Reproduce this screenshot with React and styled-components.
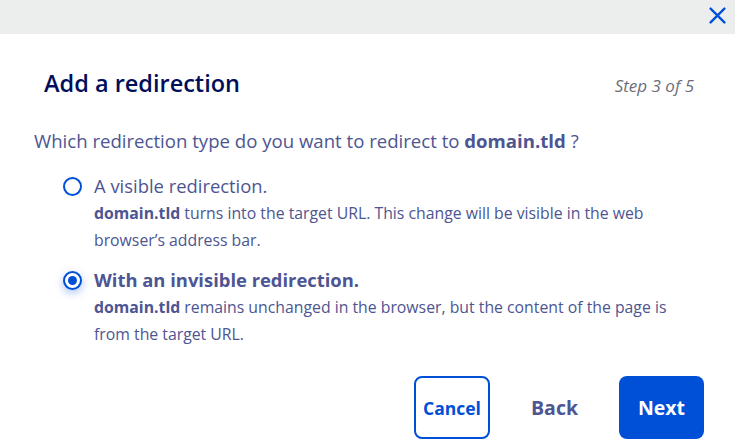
import React, { useState } from 'react';
import styled, { createGlobalStyle } from 'styled-components';

const GlobalStyle = createGlobalStyle`
  html, body {
    margin: 0;
    padding: 0;
    background: #ffffff;
  }
  body {
    font-family: "Open Sans", "Noto Sans", sans-serif;
    color: #4d5592;
  }
`;

const options = [
  {
    id: 'visible',
    title: 'A visible redirection.',
    text: 'turns into the target URL. This change will be visible in the web browser’s address bar.',
  },
  {
    id: 'invisible',
    title: 'With an invisible redirection.',
    text: 'remains unchanged in the browser, but the content of the page is from the target URL.',
  },
];

const App = () => {
  const [selected, setSelected] = useState('invisible');

  return (
    <Modal>
      <GlobalStyle />
      <TopBar>
        <CloseButton aria-label="Close">
          <svg width="17" height="17" viewBox="0 0 16 16">
            <path
              d="M1.5 1.5 L14.5 14.5 M14.5 1.5 L1.5 14.5"
              stroke="#0050d7"
              strokeWidth="2.2"
              strokeLinecap="round"
            />
          </svg>
        </CloseButton>
      </TopBar>

      <Body>
        <Header>
          <Title>Add a redirection</Title>
          <Step>Step 3 of 5</Step>
        </Header>

        <Question>
          Which redirection type do you want to redirect to <b>domain.tld</b> ?
        </Question>

        <OptionList>
          {options.map((option) => (
            <Option key={option.id} onClick={() => setSelected(option.id)}>
              <Radio checked={selected === option.id} />
              <OptionBody>
                <OptionTitle checked={selected === option.id}>
                  {option.title}
                </OptionTitle>
                <OptionText>
                  <b>domain.tld</b> {option.text}
                </OptionText>
              </OptionBody>
            </Option>
          ))}
        </OptionList>

        <Footer>
          <OutlineButton>Cancel</OutlineButton>
          <GhostButton>Back</GhostButton>
          <PrimaryButton>Next</PrimaryButton>
        </Footer>
      </Body>
    </Modal>
  );
};

const Modal = styled.div`
  width: 735px;
  height: 447px;
  background: #ffffff;
  overflow: hidden;
`;

const TopBar = styled.div`
  height: 34px;
  background: #eceeed;
  display: flex;
  justify-content: flex-end;
  align-items: center;
  padding-right: 8px;
`;

const CloseButton = styled.button`
  border: 0;
  background: none;
  padding: 0;
  width: 20px;
  height: 20px;
  display: flex;
  align-items: center;
  justify-content: center;
  margin-top: -4px;
  cursor: pointer;
`;

const Body = styled.div`
  padding: 0 41px 0 34px;
`;

const Header = styled.div`
  display: flex;
  justify-content: space-between;
  align-items: baseline;
  padding: 34px 0 0 10px;
`;

const Title = styled.h2`
  margin: 0;
  font-size: 23.5px;
  line-height: 30px;
  font-weight: 600;
  color: #000e5c;
`;

const Step = styled.span`
  font-size: 17px;
  font-style: italic;
  color: #6d6d79;
`;

const Question = styled.p`
  margin: 31px 0 0;
  font-size: 18.6px;
  line-height: 24px;
  color: #4d5592;

  b {
    font-weight: 700;
  }
`;

const OptionList = styled.div`
  display: flex;
  flex-direction: column;
  gap: 12px;
  margin-top: 19px;
  padding-left: 29px;
`;

const Option = styled.label`
  display: flex;
  gap: 12px;
  cursor: pointer;
`;

const Radio = styled.span`
  flex: none;
  box-sizing: border-box;
  width: 19px;
  height: 19px;
  margin-top: 5px;
  border-radius: 50%;
  border: 2px solid #0050d7;
  background: #ffffff;
  position: relative;
  box-shadow: ${({ checked }) =>
    checked ? '0 3px 8px rgba(0, 80, 215, 0.35)' : 'none'};

  &::after {
    content: '';
    display: ${({ checked }) => (checked ? 'block' : 'none')};
    position: absolute;
    inset: 3px;
    border-radius: 50%;
    background: #0050d7;
  }
`;

const OptionBody = styled.div`
  display: flex;
  flex-direction: column;
`;

const OptionTitle = styled.span`
  font-size: 18.4px;
  line-height: 28px;
  font-weight: ${({ checked }) => (checked ? 700 : 400)};
  color: #4d5592;
`;

const OptionText = styled.p`
  margin: 0;
  font-size: 15.8px;
  line-height: 27px;
  color: #4d5592;

  b {
    font-weight: 700;
  }
`;

const Footer = styled.div`
  display: flex;
  justify-content: flex-end;
  align-items: center;
  margin: 28px -10px 0 0;
`;

const BaseButton = styled.button`
  font-family: "Open Sans", "Noto Sans", sans-serif;
  font-weight: 700;
  height: 63px;
  border-radius: 8px;
  cursor: pointer;
`;

const OutlineButton = styled(BaseButton)`
  width: 76px;
  border: 2px solid #0050d7;
  background: #ffffff;
  color: #0050d7;
  font-size: 17.5px;
  padding: 0;
`;

const GhostButton = styled(BaseButton)`
  width: 129px;
  border: 0;
  background: none;
  color: #4d5592;
  font-size: 19.5px;
`;

const PrimaryButton = styled(BaseButton)`
  width: 85px;
  border: 0;
  background: #0050d7;
  color: #ffffff;
  font-size: 19.5px;
`;

export default App;
